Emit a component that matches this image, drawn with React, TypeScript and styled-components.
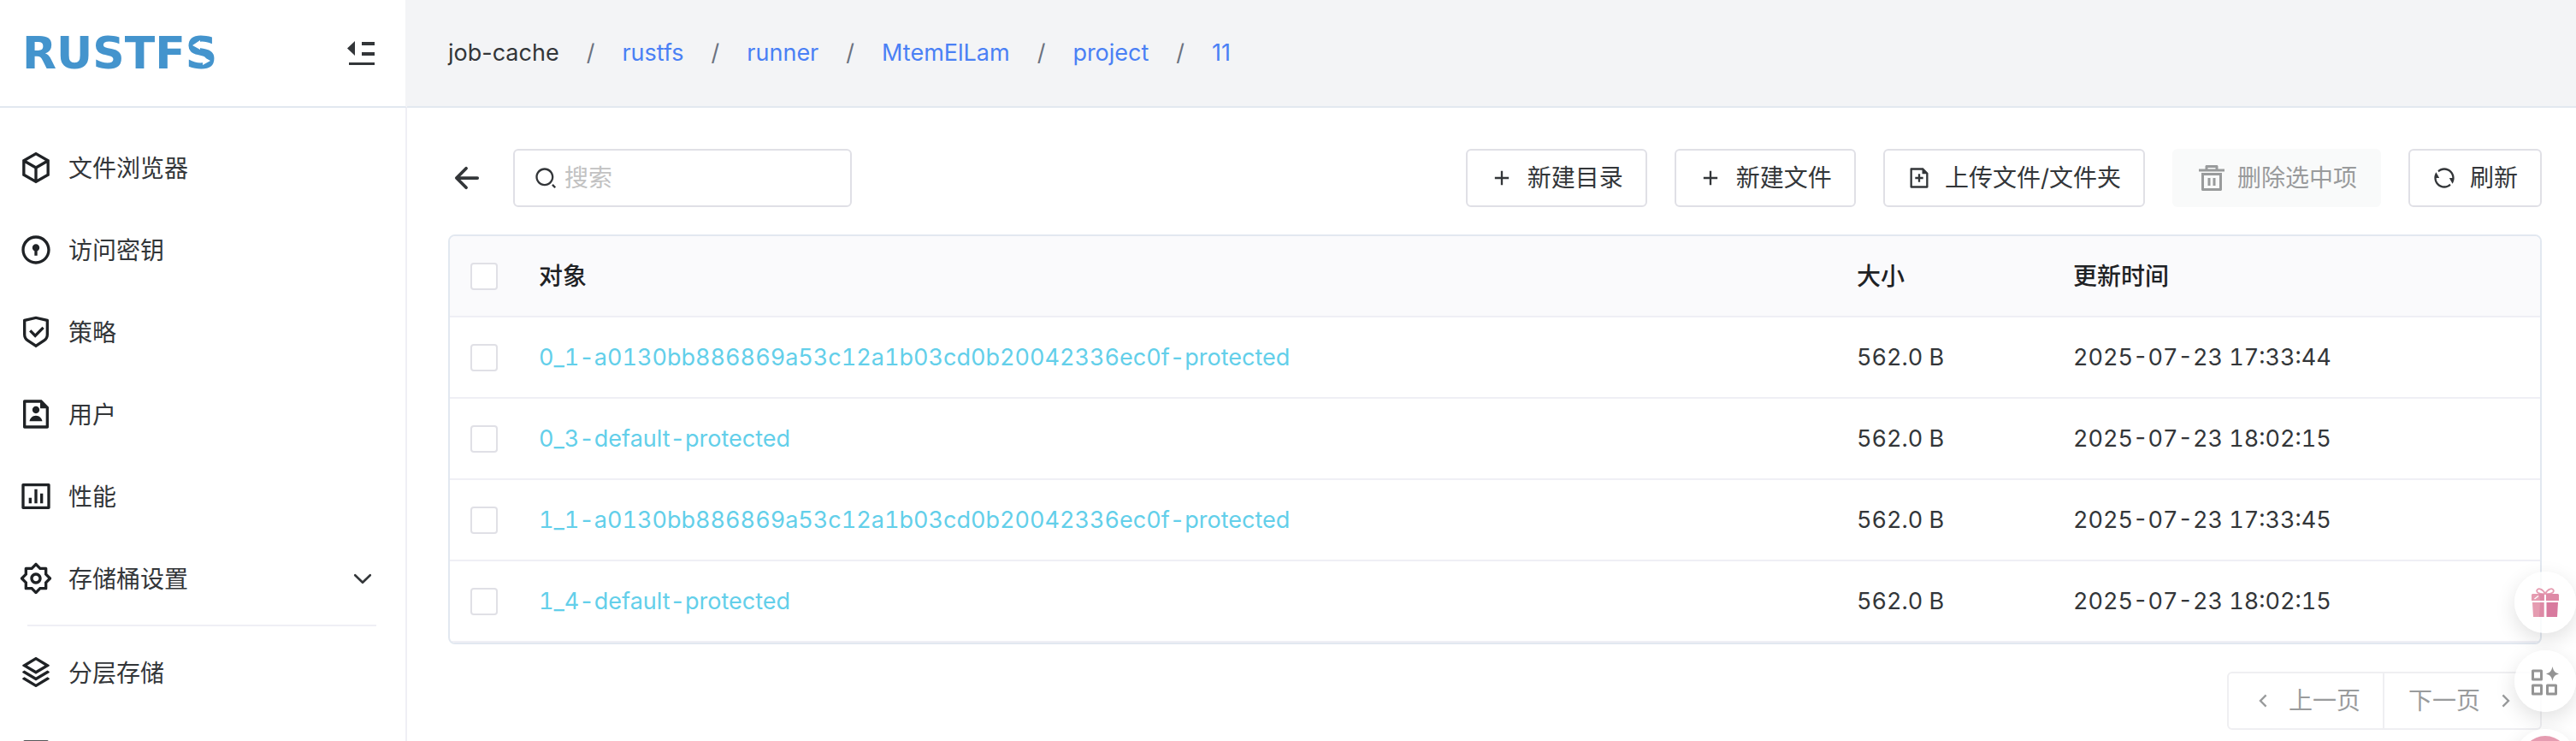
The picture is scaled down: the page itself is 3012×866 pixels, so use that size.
import React, { useState } from "react";
import styled, { createGlobalStyle } from "styled-components";
import type { IconType } from "react-icons";
import {
  RiAddLine,
  RiArrowLeftSLine,
  RiArrowRightSLine,
  RiBarChartBoxLine,
  RiBox3Line,
  RiCalculatorLine,
  RiDeleteBin5Line,
  RiDoorLockLine,
  RiFileAddLine,
  RiFileUserLine,
  RiRefreshLine,
  RiSearch2Line,
  RiSettings2Line,
  RiShieldCheckLine,
  RiStackLine,
} from "react-icons/ri";
import { IoArrowBackOutline } from "react-icons/io5";

const color = {
  text: "#333639",
  strong: "#1f2225",
  muted: "#c2c2c2",
  border: "#e0e0e6",
  line: "#e2e8f0",
  divider: "#efeff5",
  link: "#4a80f5",
  object: "#63cfea",
  brand: "#4494cd",
};

const GlobalStyle = createGlobalStyle`
  * { box-sizing: border-box; }
  body {
    margin: 0;
    background: #fff;
    color: ${color.text};
    font-family: Inter, "Noto Sans CJK SC", sans-serif;
    font-size: 28px;
    line-height: 40px;
  }
  button, input { font: inherit; color: inherit; }
  a { color: inherit; text-decoration: none; }
  svg { display: block; flex: none; }
`;

const Shell = styled.div`
  display: flex;
  height: 100vh;
  overflow: hidden;
`;

const Sidebar = styled.aside`
  display: flex;
  flex-direction: column;
  flex: none;
  width: 476px;
`;

const SidebarHeader = styled.div`
  display: flex;
  flex: none;
  align-items: center;
  justify-content: space-between;
  height: 126px;
  padding: 0 36px 0 26px;
  border-bottom: 2px solid ${color.line};
  border-right: 2px solid #f3f4f6;
`;

const Logo = styled.a`
  color: ${color.brand};
  font: bold 52px/60px "DejaVu Sans", sans-serif;
`;

const LogoArrowLetter = styled.span`
  position: relative;

  svg {
    position: absolute;
    inset: 0;
  }
`;

const IconButton = styled.button`
  display: flex;
  align-items: center;
  justify-content: center;
  padding: 0;
  border: 0;
  background: none;
  cursor: pointer;
`;

const BackButton = styled(IconButton)`
  width: 44px;
  height: 44px;
`;

const Menu = styled.nav`
  display: flex;
  flex-direction: column;
  flex: 1;
  gap: 12px;
  padding-top: 28px;
  border-right: 2px solid ${color.divider};
`;

const MenuItem = styled.a`
  display: flex;
  flex: none;
  align-items: center;
  gap: 18px;
  height: 84px;
  padding: 0 34px 0 22px;

  > svg:first-child { color: ${color.strong}; }
`;

const MenuLabel = styled.span`
  flex: 1;
  padding-top: 2px;
`;

const MenuDivider = styled.hr`
  flex: none;
  align-self: stretch;
  height: 2px;
  margin: 0 34px 0 32px;
  border: 0;
  background: ${color.divider};
`;

const Content = styled.div`
  display: flex;
  flex-direction: column;
  flex: 1;
  min-width: 0;
`;

const TopBar = styled.header`
  display: flex;
  flex: none;
  align-items: center;
  height: 126px;
  padding: 0 48px;
  border-bottom: 2px solid ${color.line};
  background: #f3f4f6;
`;

const Breadcrumb = styled.ol`
  display: flex;
  gap: 32px;
  margin: 0;
  padding: 0;
  list-style: none;
  font-size: 27px;
`;

const Crumb = styled.li`
  display: flex;
  gap: 32px;

  a { color: ${color.link}; }

  & + &::before {
    content: "/";
    color: #6b7280;
  }
`;

const Main = styled.main`
  display: flex;
  flex-direction: column;
  gap: 32px;
  padding: 48px 40px 0 48px;
`;

const Toolbar = styled.div`
  display: flex;
  align-items: center;
  justify-content: space-between;
`;

const ToolGroup = styled.div`
  display: flex;
  align-items: center;
  gap: 32px;
`;

const SearchBox = styled.label`
  display: flex;
  align-items: center;
  gap: 8px;
  width: 396px;
  height: 68px;
  padding: 0 22px;
  border: 2px solid ${color.border};
  border-radius: 6px;
`;

const SearchInput = styled.input`
  flex: 1;
  min-width: 0;
  padding: 0;
  border: 0;
  outline: 0;
  background: none;

  &::placeholder { color: ${color.muted}; opacity: 1; }
`;

const Button = styled.button<{ $tone?: "soft" }>`
  display: flex;
  align-items: center;
  gap: ${(p) => (p.$tone === "soft" ? 12 : 16)}px;
  height: 68px;
  padding: 0 26px;
  border: 2px solid ${(p) => (p.$tone === "soft" ? "transparent" : color.border)};
  border-radius: 6px;
  background: ${(p) => (p.$tone === "soft" ? "#f9fafa" : "#fff")};
  white-space: nowrap;
  cursor: pointer;

  &:disabled {
    color: #999b9c;
    cursor: not-allowed;
  }
`;

const TableFrame = styled.div`
  overflow: hidden;
  border: 2px solid ${color.line};
  border-radius: 8px;
`;

const Table = styled.table`
  width: 100%;
  border-collapse: separate;
  border-spacing: 0;
  table-layout: fixed;
`;

const Column = styled.col<{ $width?: number }>`
  width: ${(p) => (p.$width ? `${p.$width}px` : "auto")};
`;

const HeadCell = styled.th`
  height: 95px;
  padding: 0 24px;
  border-bottom: 2px solid ${color.divider};
  background: #fafafc;
  color: ${color.strong};
  font-weight: 500;
  text-align: left;
`;

const Cell = styled.td`
  height: 95px;
  padding: 0 24px;
  border-bottom: 2px solid ${color.divider};
  font-size: 27px;
  font-variant-numeric: tabular-nums;
`;

const ObjectLink = styled.a`
  color: ${color.object};
`;

const Checkbox = styled.input`
  display: block;
  appearance: none;
  width: 32px;
  height: 32px;
  margin: 0;
  border: 2px solid ${color.border};
  border-radius: 4px;
  background: #fff;

  &:checked {
    border-color: ${color.brand};
    background: ${color.brand};
  }
`;

const Pager = styled.nav`
  display: flex;
  align-self: flex-end;
`;

const PagerButton = styled(Button)`
  border-color: #efeff2;

  &:first-child { border-radius: 6px 0 0 6px; }
  &:last-child { border-radius: 0 6px 6px 0; padding-left: 28px; border-left: 0; }
`;

const FloatingDock = styled.div`
  position: fixed;
  top: 668px;
  right: 0;
  display: flex;
  flex-direction: column;
  gap: 20px;
`;

const FloatingButton = styled(IconButton)`
  width: 72px;
  height: 72px;
  border-radius: 50%;
  background: rgba(255, 255, 255, 0.8);
  box-shadow: 0 8px 24px rgba(0, 0, 0, 0.12);
`;

const CollapseIcon = () => (
  <svg width="32" height="28" viewBox="0 0 32 28" fill="currentColor" aria-hidden="true">
    <path d="M9 0v17L0 8.500zM17 1h15v4H17zM17 13h15v4H17zM2 25h30v3H2z" />
  </svg>
);

const ChevronDown = () => (
  <svg width="32" height="32" viewBox="0 0 16 16" aria-hidden="true">
    <path
      d="M3.600 6.100 8 10.400l4.400-4.300"
      fill="none"
      stroke="currentColor"
      strokeWidth="1.300"
      strokeLinecap="round"
      strokeLinejoin="round"
    />
  </svg>
);

const LogoArrows = () => (
  <svg width="38" height="60" viewBox="0 0 38 60" fill="#fff" aria-hidden="true">
    <path d="M8 21l9-6v11zM29 39l-9-5v10z" />
  </svg>
);

const GiftIcon = () => (
  <svg width="32" height="34" viewBox="0 0 32 34" aria-hidden="true">
    <g fill="none" stroke="#e59cb1" strokeWidth="1.800">
      <path d="M16 7C13 1 8 0 6.500 2.500S9 8 16 7z" />
      <path d="M16 7c3-6 8-7 9.500-4.500S23 8 16 7z" />
    </g>
    <path fill="#e59cb1" d="M1 7h14v8H0V8zM1 17h13.500v17H2z" />
    <path fill="#de8aa6" d="M9 7h5.500v8H10zM17 7h14l1 1v7H17zM10 17h4.500v17H9z" />
    <path fill="#d87a9e" d="M17.500 17H31l-1 17H17.500z" />
    <path fill="none" stroke="#fff" strokeWidth="1.400" d="M3.500 13 8 9.500" />
  </svg>
);

const AppsIcon = () => (
  <svg width="32" height="34" viewBox="0 0 32 34" aria-hidden="true">
    <g fill="none" stroke="#949494" strokeWidth="3" strokeLinejoin="round">
      <path d="M1.500 5h10v10h-10zM1.500 22h10v10h-10zM18.500 22h10v10h-10z" />
    </g>
    <path
      fill="#949494"
      d="M24.500 0c1.200 5.200 2.300 6.800 7.500 8.500-5.200 1.700-6.300 3.300-7.500 8.500-1.200-5.200-2.300-6.800-7.500-8.500 5.200-1.700 6.300-3.300 7.500-8.500z"
    />
  </svg>
);

const AssistantIcon = () => (
  <svg width="56" height="56" viewBox="0 0 56 56" aria-hidden="true">
    <circle cx="28" cy="28" r="28" fill="#e59cb1" />
  </svg>
);

const primaryMenu: { label: string; icon: IconType; expandable?: boolean }[] = [
  { label: "文件浏览器", icon: RiBox3Line },
  { label: "访问密钥", icon: RiDoorLockLine },
  { label: "策略", icon: RiShieldCheckLine },
  { label: "用户", icon: RiFileUserLine },
  { label: "性能", icon: RiBarChartBoxLine },
  { label: "存储桶设置", icon: RiSettings2Line, expandable: true },
];

const path = ["rustfs", "runner", "MtemElLam", "project", "11"];

const objects = [
  { name: "0_1-a0130bb886869a53c12a1b03cd0b20042336ec0f-protected", updated: "2025-07-23 17:33:44" },
  { name: "0_3-default-protected", updated: "2025-07-23 18:02:15" },
  { name: "1_1-a0130bb886869a53c12a1b03cd0b20042336ec0f-protected", updated: "2025-07-23 17:33:45" },
  { name: "1_4-default-protected", updated: "2025-07-23 18:02:15" },
].map((item) => ({ ...item, size: "562.0 B" }));

export default function App() {
  const [selected, setSelected] = useState<string[]>([]);
  const [query, setQuery] = useState("");

  const toggle = (name: string) =>
    setSelected((prev) => (prev.includes(name) ? prev.filter((n) => n !== name) : [...prev, name]));
  const allSelected = selected.length === objects.length;

  return (
    <>
      <GlobalStyle />
      <Shell>
        <Sidebar>
          <SidebarHeader>
            <Logo href="#">
              RUSTF
              <LogoArrowLetter>
                S<LogoArrows />
              </LogoArrowLetter>
            </Logo>
            <IconButton type="button" aria-label="收起菜单">
              <CollapseIcon />
            </IconButton>
          </SidebarHeader>
          <Menu>
            {primaryMenu.map(({ label, icon: Icon, expandable }) => (
              <MenuItem key={label} href="#">
                <Icon size={40} />
                <MenuLabel>{label}</MenuLabel>
                {expandable && <ChevronDown />}
              </MenuItem>
            ))}
            <MenuDivider />
            <MenuItem href="#">
              <RiStackLine size={40} />
              <MenuLabel>分层存储</MenuLabel>
            </MenuItem>
            <MenuItem href="#" aria-label="更多">
              <RiCalculatorLine size={40} />
            </MenuItem>
          </Menu>
        </Sidebar>

        <Content>
          <TopBar>
            <nav aria-label="路径">
              <Breadcrumb>
                <Crumb>job-cache</Crumb>
                {path.map((part) => (
                  <Crumb key={part}>
                    <a href="#">{part}</a>
                  </Crumb>
                ))}
              </Breadcrumb>
            </nav>
          </TopBar>

          <Main>
            <Toolbar>
              <ToolGroup>
                <BackButton type="button" aria-label="返回">
                  <IoArrowBackOutline size={40} />
                </BackButton>
                <SearchBox>
                  <RiSearch2Line size={28} />
                  <SearchInput
                    aria-label="搜索"
                    placeholder="搜索"
                    value={query}
                    onChange={(e) => setQuery(e.target.value)}
                  />
                </SearchBox>
              </ToolGroup>
              <ToolGroup>
                <Button type="button">
                  <RiAddLine size={28} />
                  新建目录
                </Button>
                <Button type="button">
                  <RiAddLine size={28} />
                  新建文件
                </Button>
                <Button type="button">
                  <RiFileAddLine size={28} />
                  上传文件/文件夹
                </Button>
                <Button type="button" $tone="soft" disabled={selected.length === 0}>
                  <RiDeleteBin5Line size={36} />
                  删除选中项
                </Button>
                <Button type="button">
                  <RiRefreshLine size={28} />
                  刷新
                </Button>
              </ToolGroup>
            </Toolbar>

            <TableFrame>
              <Table>
                <colgroup>
                  <Column $width={80} />
                  <Column />
                  <Column $width={253} />
                  <Column $width={570} />
                </colgroup>
                <thead>
                  <tr>
                    <HeadCell>
                      <Checkbox
                        type="checkbox"
                        aria-label="全选"
                        checked={allSelected}
                        onChange={() => setSelected(allSelected ? [] : objects.map((o) => o.name))}
                      />
                    </HeadCell>
                    <HeadCell>对象</HeadCell>
                    <HeadCell>大小</HeadCell>
                    <HeadCell>更新时间</HeadCell>
                  </tr>
                </thead>
                <tbody>
                  {objects.map((item) => (
                    <tr key={item.name}>
                      <Cell>
                        <Checkbox
                          type="checkbox"
                          aria-label={item.name}
                          checked={selected.includes(item.name)}
                          onChange={() => toggle(item.name)}
                        />
                      </Cell>
                      <Cell>
                        <ObjectLink href="#">{item.name}</ObjectLink>
                      </Cell>
                      <Cell>{item.size}</Cell>
                      <Cell>{item.updated}</Cell>
                    </tr>
                  ))}
                </tbody>
              </Table>
            </TableFrame>

            <Pager aria-label="分页">
              <PagerButton type="button" disabled>
                <RiArrowLeftSLine size={28} />
                上一页
              </PagerButton>
              <PagerButton type="button" disabled>
                下一页
                <RiArrowRightSLine size={28} />
              </PagerButton>
            </Pager>
          </Main>
        </Content>

        <FloatingDock>
          <FloatingButton type="button" aria-label="礼物">
            <GiftIcon />
          </FloatingButton>
          <FloatingButton type="button" aria-label="应用">
            <AppsIcon />
          </FloatingButton>
          <FloatingButton type="button" aria-label="助手">
            <AssistantIcon />
          </FloatingButton>
        </FloatingDock>
      </Shell>
    </>
  );
}
